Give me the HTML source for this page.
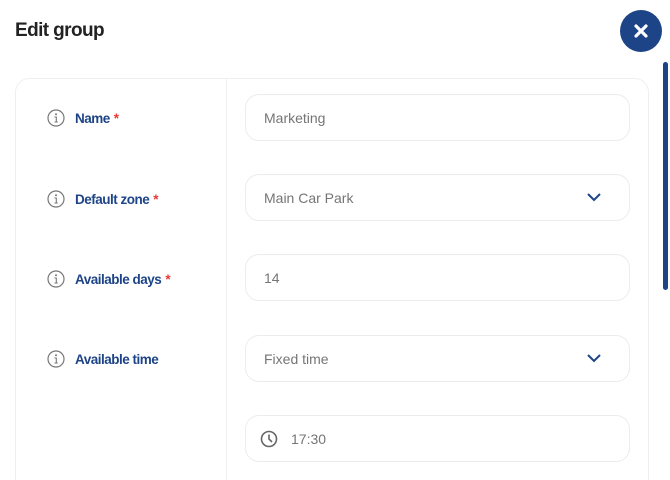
<!DOCTYPE html>
<html style="width:670px;height:480px;overflow:hidden"><head><style>
*{margin:0;padding:0;box-sizing:border-box}
body{width:670px;height:480px;overflow:hidden;background:#fff;font-family:"Liberation Sans",sans-serif;position:relative}
h1{position:absolute;left:15px;top:20px;font-size:19px;font-weight:bold;color:#222;letter-spacing:-0.6px}
.close{position:absolute;left:620px;top:10px;width:42px;height:42px;border-radius:50%;background:#1d4487}
.scroll{position:absolute;left:663px;top:62px;width:5px;height:228px;border-radius:3px;background:#1d4487}
.card{position:absolute;left:15px;top:78px;width:634px;height:402px;border:1px solid #efefef;border-bottom:none;border-radius:14px 14px 0 0}
.div{position:absolute;left:226px;top:79px;width:1px;height:401px;background:#efefef}
.lbl{position:absolute;left:47px;height:20px;display:flex;align-items:center;font-size:13.5px;font-weight:bold;color:#1d4487;letter-spacing:-0.5px}
.lbl svg{margin-right:10px}
.lbl .s{color:#e53935;margin-left:4px}
.in{position:absolute;left:245px;width:385px;height:47px;border:1px solid #ececec;border-radius:14px;font-size:14px;color:#757575;padding-left:18px;display:flex;align-items:center}
.chev{position:absolute;right:28px;top:17px}
</style></head><body>
<h1>Edit group</h1>
<div class="close"><svg width="42" height="42" viewBox="0 0 42 42"><path d="M16 16L26 26M26 16L16 26" stroke="#fff" stroke-width="3.2" stroke-linecap="round"/></svg></div>
<div class="scroll"></div>
<div class="card"></div>
<div class="div"></div>
<svg width="0" height="0" style="position:absolute"><defs><g id="i"><circle cx="9" cy="9" r="8" fill="none" stroke="#777" stroke-width="1.2"/><circle cx="9" cy="5.3" r="1" fill="#777"/><path d="M7.5 8H9.3V13M7.5 13H10.8" stroke="#777" stroke-width="1.1" fill="none"/></g></defs></svg>
<div class="lbl" style="top:108px"><svg width="18" height="18"><use href="#i"/></svg>Name<span class="s">*</span></div>
<div class="lbl" style="top:189px"><svg width="18" height="18"><use href="#i"/></svg>Default zone<span class="s">*</span></div>
<div class="lbl" style="top:269px"><svg width="18" height="18"><use href="#i"/></svg>Available days<span class="s">*</span></div>
<div class="lbl" style="top:349px"><svg width="18" height="18"><use href="#i"/></svg>Available time</div>
<div class="in" style="top:94px">Marketing</div>
<div class="in" style="top:174px">Main Car Park<svg class="chev" width="14" height="10"><path d="M1 2L7 8L13 2" stroke="#1d4487" stroke-width="2" fill="none"/></svg></div>
<div class="in" style="top:254px">14</div>
<div class="in" style="top:335px">Fixed time<svg class="chev" width="14" height="10"><path d="M1 2L7 8L13 2" stroke="#1d4487" stroke-width="2" fill="none"/></svg></div>
<div class="in" style="top:415px;padding-left:14px"><svg width="18" height="18" style="margin-right:13px"><circle cx="9" cy="9" r="7.5" fill="none" stroke="#666" stroke-width="1.6"/><path d="M9 4.5V9L12 12" stroke="#666" stroke-width="1.6" fill="none"/></svg>17:30</div>
</body></html>
